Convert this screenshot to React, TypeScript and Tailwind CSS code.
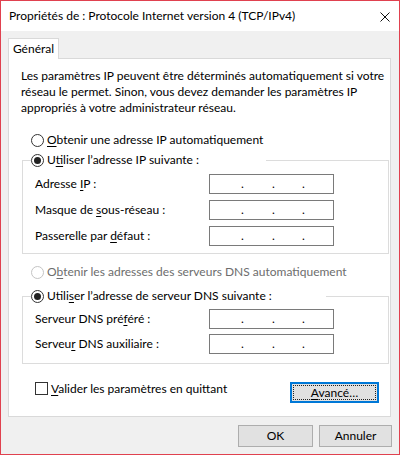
import React from "react";

function U({ children }: { children: React.ReactNode }) {
  return <span className="underline decoration-1 underline-offset-[2px]">{children}</span>;
}

function Radio({ checked, disabled }: { checked?: boolean; disabled?: boolean }) {
  return (
    <span
      className={
        disabled
          ? "flex h-[13px] w-[13px] shrink-0 items-center justify-center rounded-full border border-[#c4c4c4] bg-white"
          : "flex h-[13px] w-[13px] shrink-0 items-center justify-center rounded-full border border-[#333333] bg-white"
      }
    >
      {checked && <span className="h-[7px] w-[7px] rounded-full bg-[#222222]" />}
    </span>
  );
}

function IpField() {
  return (
    <div className="flex h-[20px] w-[125px] items-center border border-[#7a7a7a] bg-white leading-[16px]">
      <span className="w-[31px]" />
      <span className="w-[3px]">.</span>
      <span className="w-[28px]" />
      <span className="w-[3px]">.</span>
      <span className="w-[27px]" />
      <span className="w-[3px]">.</span>
    </div>
  );
}

function FieldRow({ label }: { label: React.ReactNode }) {
  return (
    <div className="flex h-[20px] items-center">
      <span className="w-[186px] pl-[12px]">{label}</span>
      <IpField />
    </div>
  );
}

export default function App() {
  return (
    <div className="flex h-[455px] w-[400px] flex-col border border-[#e0414f] bg-[#f0f0f0] font-['Lato',sans-serif] text-[12px] leading-[16px] text-black">
      {/* Barre de titre */}
      <div className="flex h-[30px] shrink-0 items-center justify-between bg-white pl-[8px] pr-[9px]">
        <span>Propriétés de : Protocole Internet version 4 (TCP/IPv4)</span>
        <svg width="10" height="10" viewBox="0 0 10 10" className="mt-[1px]">
          <path d="M0.5 0.5 L9.5 9.5 M9.5 0.5 L0.5 9.5" stroke="#111" strokeWidth="1" />
        </svg>
      </div>

      <div className="flex-1 px-[7px] pt-[7px]">
        {/* Onglet */}
        <div className="relative z-10 -mb-px flex h-[21px] w-[51px] items-center justify-center border border-b-0 border-[#d9d9d9] bg-white">
          Général
        </div>

        {/* Panneau */}
        <div className="h-[359px] w-[383px] border border-[#d9d9d9] bg-white">
          <p className="ml-[12px] mt-[9px] whitespace-nowrap leading-[16px]">
            Les paramètres IP peuvent être déterminés automatiquement si votre
            <br />
            réseau le permet. Sinon, vous devez demander les paramètres IP
            <br />
            appropriés à votre administrateur réseau.
          </p>

          <div className="ml-[22px] mt-[16px] flex h-[16px] items-center gap-[3px]">
            <Radio />
            <span>
              <U>O</U>btenir une adresse IP automatiquement
            </span>
          </div>

          <div className="ml-[13px] mt-[12px] h-[94px] w-[367px] border border-[#dcdcdc]">
            <div className="-mt-[9px] ml-[8px] flex h-[16px] w-[235px] items-center gap-[3px] bg-white">
              <Radio checked />
              <span>
                U<U>t</U>iliser l’adresse IP suivante :
              </span>
            </div>
            <div className="mt-[6px] flex flex-col gap-[6px]">
              <FieldRow label={<>Adresse <U>I</U>P :</>} />
              <FieldRow label={<>Masque de <U>s</U>ous-réseau :</>} />
              <FieldRow label={<>Passerelle par <U>d</U>éfaut :</>} />
            </div>
          </div>

          <div className="ml-[22px] mt-[10px] flex h-[16px] items-center gap-[3px] text-[#6d6d6d]">
            <Radio disabled />
            <span>
              O<U>b</U>tenir les adresses des serveurs DNS automatiquement
            </span>
          </div>

          <div className="ml-[13px] mt-[16px] h-[68px] w-[367px] border border-[#dcdcdc]">
            <div className="-mt-[9px] ml-[8px] flex h-[16px] w-[295px] items-center gap-[3px] bg-white">
              <Radio checked />
              <span>
                Utili<U>s</U>er l’adresse de serveur DNS suivante :
              </span>
            </div>
            <div className="mt-[5px] flex flex-col gap-[5px]">
              <FieldRow label={<>Serveur DNS pré<U>f</U>éré :</>} />
              <FieldRow label={<>Serveu<U>r</U> DNS auxiliaire :</>} />
            </div>
          </div>

          <div className="mt-[18px] flex items-start justify-between">
            <div className="ml-[26px] flex h-[13px] items-center gap-[3px]">
              <span className="h-[13px] w-[13px] border border-[#333333] bg-white" />
              <span>
                <U>V</U>alider les paramètres en quittant
              </span>
            </div>
            <div className="mr-[11px] h-[21px] w-[89px] border-2 border-[#0078d7] bg-[#e1e1e1] p-px">
              <div className="flex h-full w-full items-center justify-center border border-dotted border-[#222222]">
                <span>
                  <U>A</U>vancé…
                </span>
              </div>
            </div>
          </div>
        </div>

        {/* Boutons */}
        <div className="mt-[8px] flex justify-end gap-[6px]">
          <div className="flex h-[22px] w-[75px] items-center justify-center border border-[#adadad] bg-[#e1e1e1]">
            OK
          </div>
          <div className="flex h-[22px] w-[73px] items-center justify-center border border-[#adadad] bg-[#e1e1e1]">
            Annuler
          </div>
        </div>
      </div>
    </div>
  );
}
